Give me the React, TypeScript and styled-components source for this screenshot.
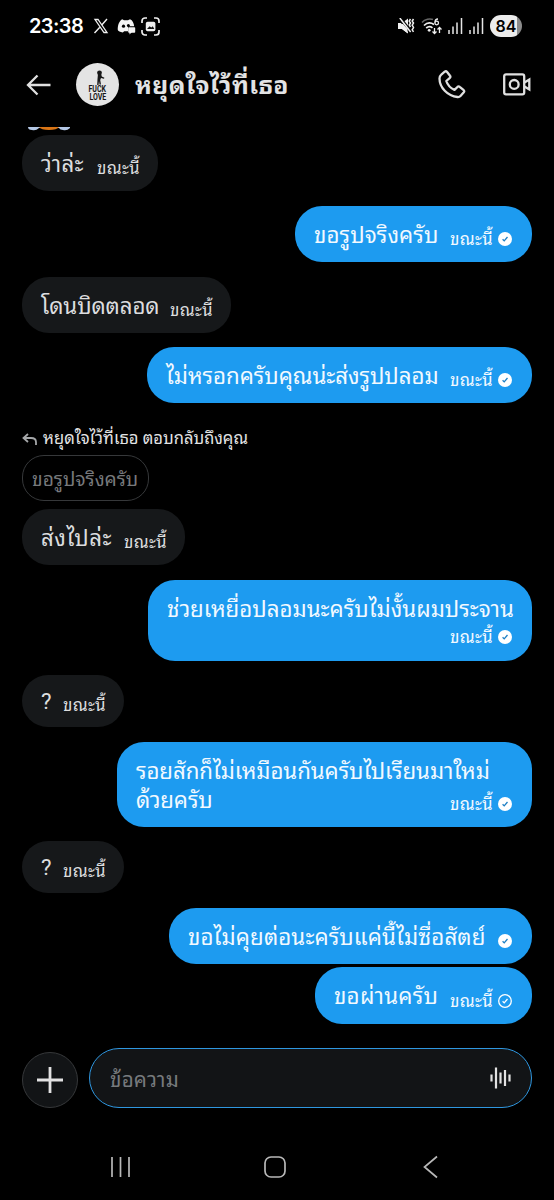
import React from "react";
import styled, { createGlobalStyle } from "styled-components";

const Global = createGlobalStyle`
  * { box-sizing: border-box; }
  body { margin: 0; background: #000; }
`;

const Screen = styled.div`
  width: 554px;
  height: 1200px;
  overflow: hidden;
  display: flex;
  flex-direction: column;
  background: #000;
  color: #e2e3e4;
  font-family: Roboto, "Noto Sans Thai Looped", "Noto Sans Thai", "Noto Sans", "Open Sans", sans-serif;
`;

const StatusBar = styled.header`
  height: 52px;
  flex: none;
  display: flex;
  align-items: center;
  justify-content: space-between;
  padding: 0 32px 0 29px;
  svg { display: block; flex: none; }
`;

const StatusGroup = styled.div<{ $gap: number }>`
  display: flex;
  align-items: center;
  gap: ${(p) => p.$gap}px;
`;

const Clock = styled.span`
  font: 600 20px/24px Inter, sans-serif;
  color: #fff;
  width: 56px;
  white-space: nowrap;
  letter-spacing: -0.6px;
`;

const DiscordIcon = styled.svg`
  margin-left: 0;
`;

const CaptureIcon = styled.svg`
  margin-left: -3px;
`;

const Battery = styled.span`
  width: 32px;
  height: 22px;
  border-radius: 11px;
  background: linear-gradient(90deg, #ececec 84%, #8b8b8b 84%);
  color: #000;
  font: 600 16px/22px Inter, sans-serif;
  text-align: center;
`;

const TopBar = styled.div`
  height: 75px;
  flex: none;
  display: flex;
  align-items: center;
  padding: 0 23px 10px 26px;
  svg { display: block; flex: none; }
`;

const Avatar = styled.div`
  width: 43px;
  height: 43px;
  margin-left: 25px;
  border-radius: 50%;
  background: #e4e4e4;
  color: #171717;
  display: flex;
  flex-direction: column;
  align-items: center;
  padding-top: 7px;
`;

const AvatarWord = styled.span`
  font: 700 9px/8px Roboto, sans-serif;
  transform: scaleX(0.78);
`;

const Title = styled.h1`
  margin: 0 auto 0 16px;
  padding-top: 2px;
  font-size: 24.6px;
  font-weight: 700;
  line-height: 32px;
  white-space: nowrap;
  letter-spacing: 0.45px;
`;

const Actions = styled.div`
  display: flex;
  align-items: center;
  gap: 37px;
`;

const Thread = styled.main`
  flex: none;
  height: 920px;
  padding: 0 22px;
  display: flex;
  flex-direction: column;
  align-items: flex-start;
`;

const Sticker = styled.svg`
  display: block;
  margin-left: 5px;
  flex: none;
`;

const Bubble = styled.div<{ $mine?: boolean; $w: number; $h: number; $gap: number }>`
  flex: none;
  align-self: ${(p) => (p.$mine ? "flex-end" : "flex-start")};
  width: ${(p) => p.$w}px;
  height: ${(p) => p.$h}px;
  margin-top: ${(p) => p.$gap}px;
  border-radius: 27px;
  background: ${(p) => (p.$mine ? "#1d9bf0" : "#16181a")};
  color: ${(p) => (p.$mine ? "#f2f9ff" : "#dcdddf")};
  padding: ${(p) => (p.$h < 56 ? 12 : 15)}px 18px ${(p) => (p.$h > 60 ? 13 : 12)}px 19px;
  display: flex;
  flex-direction: column;
`;

const LastRow = styled.div`
  flex: 1;
  display: flex;
  justify-content: space-between;
`;

const Words = styled.div<{ $track: number }>`
  flex: none;
  height: 29px;
  font-size: 22.3px;
  line-height: 29px;
  white-space: nowrap;
  letter-spacing: ${(p) => p.$track}px;
`;

const Meta = styled.div`
  display: flex;
  flex: none;
  align-items: center;
  align-self: flex-end;
  gap: 5px;
  height: 22px;
  margin-left: auto;
  font-size: 17px;
  line-height: 22px;
  letter-spacing: 0.3px;
  white-space: nowrap;
  svg { display: block; margin-right: 2px; }
`;

const ReplyLabel = styled.div`
  display: flex;
  align-items: center;
  gap: 6px;
  height: 24px;
  margin-top: 24px;
  font-size: 16.6px;
  line-height: 24px;
  white-space: nowrap;
`;

const Quote = styled.div`
  width: 127px;
  height: 46px;
  margin-top: 4px;
  border: 1px solid #36383a;
  border-radius: 22px;
  padding-left: 9px;
  color: #77797c;
  font-size: 19.2px;
  line-height: 47px;
  white-space: nowrap;
`;

const Composer = styled.div`
  flex: none;
  height: 61px;
  padding: 0 22px;
  display: flex;
  align-items: flex-end;
  gap: 11px;
`;

const AddButton = styled.button`
  width: 56px;
  height: 56px;
  padding: 0;
  border-radius: 50%;
  border: 1px solid #36383a;
  background: #121416;
  display: flex;
  align-items: center;
  justify-content: center;
`;

const Field = styled.div`
  flex: 1;
  height: 60px;
  border: 1.5px solid #2f97e0;
  border-radius: 31px;
  background: #121416;
  display: flex;
  align-items: center;
  justify-content: space-between;
  padding: 0 19px 0 20px;
  color: #777a7d;
  font-size: 20.6px;
  letter-spacing: 0.2px;
  span { padding-bottom: 1px; }
`;

const NavBar = styled.nav`
  flex: 1;
  display: flex;
  align-items: flex-start;
  padding: 47px 0 0 109px;
  svg { display: block; }
`;

const Tick = ({ outline }: { outline?: boolean }) => (
  <svg width="14" height="14" viewBox="0 0 14 14" fill="none">
    <circle cx="7" cy="7" r={outline ? 6.3 : 7} fill={outline ? "none" : "#fff"} stroke={outline ? "#fff" : "none"} strokeWidth="1.3" />
    <path d="M4.6 7.3l1.6 1.6 3.3-3.9" stroke={outline ? "#fff" : "#1d7fc4"} strokeWidth="1.3" />
  </svg>
);

type Msg = { lines: string[]; w: number; h: number; gap: number; mine?: boolean; stack?: boolean; track?: number; time?: string; sent?: boolean };

const Message = ({ lines, w, h, gap, mine, stack, track = 0, time = "ขณะนี้", sent }: Msg) => {
  const full = stack ? lines : lines.slice(0, -1);
  const last = stack ? null : lines[lines.length - 1];
  return (
    <Bubble $mine={mine} $w={w} $h={h} $gap={gap}>
      {full.map((line) => <Words key={line} $track={track}>{line}</Words>)}
      <LastRow>
        {last && <Words $track={track}>{last}</Words>}
        <Meta>
          {time && <span>{time}</span>}
          {mine && <Tick outline={sent} />}
        </Meta>
      </LastRow>
    </Bubble>
  );
};

const before: Msg[] = [
  { lines: ["ว่าล่ะ"], w: 136, h: 56, gap: 4, track: 0.3 },
  { lines: ["ขอรูปจริงครับ"], w: 237, h: 56, gap: 15, mine: true, track: 0.1 },
  { lines: ["โดนบิดตลอด"], w: 209, h: 56, gap: 15, track: -0.1 },
  { lines: ["ไม่หรอกครับคุณน่ะส่งรูปปลอม"], w: 385, h: 56, gap: 14, mine: true, track: -0.05 },
];

const after: Msg[] = [
  { lines: ["ส่งไปล่ะ"], w: 163, h: 56, gap: 8, track: 0.5 },
  { lines: ["ช่วยเหยื่อปลอมนะครับไม่งั้นผมประจาน"], w: 384, h: 81, gap: 15, mine: true, stack: true },
  { lines: ["?"], w: 102, h: 52, gap: 14 },
  { lines: ["รอยสักก็ไม่เหมือนกันครับไปเรียนมาใหม่", "ด้วยครับ"], w: 415, h: 85, gap: 15, mine: true, track: -0.1 },
  { lines: ["?"], w: 102, h: 52, gap: 14 },
  { lines: ["ขอไม่คุยต่อนะครับแค่นี้ไม่ซื่อสัตย์"], w: 363, h: 56, gap: 15, mine: true, time: "", track: 0.1 },
  { lines: ["ขอผ่านครับ"], w: 217, h: 57, gap: 3, mine: true, sent: true, track: 0.25 },
];

const Signal = () => (
  <svg width="15" height="16" viewBox="0 0 15 16" stroke="#e6e6e6" strokeWidth="1.5">
    <path d="M1 12v4M5 8.5V16M9 4.5V16M13.5 0v16" />
  </svg>
);

export default function App() {
  return (
    <Screen>
      <Global />
      <StatusBar>
        <StatusGroup $gap={8}>
          <Clock>23:38</Clock>
          <svg width="16" height="16" viewBox="0 0 16 16" fill="none" stroke="#f0f0f0">
            <path d="M2 1.5h3l9 13h-3z" strokeWidth="1.3" />
            <path d="M14 1L9 6.7M6.8 9.2L1.5 15" strokeWidth="1.4" />
          </svg>
          <DiscordIcon width="19" height="17" viewBox="0 0 19 17">
            <path d="M5.2 1.200L7 2.200h4l2-1c2.600 1 3.800 3.800 4.200 7H11v5H7.200L5.800 14.500C3.200 14 1 13 .8 12 .6 8 1.800 3 5.200 1.200z" fill="#f4f4f4" />
            <circle cx="6.500" cy="8.200" r="1.600" /><circle cx="11.400" cy="7.600" r="1.500" />
            <rect x="11.200" y="9.300" width="7" height="5.400" rx=".8" fill="#f4f4f4" />
            <path d="M12.500 14v2.500l2.500-2.500" fill="#f4f4f4" />
          </DiscordIcon>
          <CaptureIcon width="19" height="19" viewBox="0 0 19 19" fill="none">
            <path d="M1 6V4a3 3 0 013-3h2M13 1h2a3 3 0 013 3v2M18 13v2a3 3 0 01-3 3h-2M6 18H4a3 3 0 01-3-3v-2" stroke="#eee" strokeWidth="1.7" />
            <rect x="4.8" y="4.8" width="9.6" height="9.4" rx="1.8" fill="#eee" />
            <path d="M6 12l2.6-2.8 1.7 1.2 1.5-1.2 1.5 2.8z" fill="#111" />
          </CaptureIcon>
        </StatusGroup>
        <StatusGroup $gap={6}>
          <svg width="17" height="16" viewBox="0 0 17 16">
            <path d="M0 5h4l6-4.5v15L4 11H0z" fill="#f0f0f0" />
            <path d="M1.500 0l11 14" stroke="#000" strokeWidth="4" />
            <path d="M1.8 0l10.8 14" stroke="#f0f0f0" strokeWidth="1.5" />
            <path d="M0 6h5l4.500 5v4.300L4 11H0z" fill="#f0f0f0" />
            <path d="M12.500 1l-1.300 2 1.3 2-1.3 2 1.3 2M15.500 1l-1.300 2 1.3 2-1.3 2.2 1.3 2.3-1.3 2.3 1.3 2" stroke="#f0f0f0" strokeWidth="1.5" fill="none" />
          </svg>
          <svg width="21" height="17" viewBox="0 0 21 17" fill="none">
            <path d="M1 4.5C4 1 9 .5 12 1.6" stroke="#666" strokeWidth="1.6" />
            <path d="M3 7.5c3-3 7-3 10-1M5.2 10c2-1.8 4.3-1.8 6.3-.2" stroke="#eee" strokeWidth="1.7" />
            <circle cx="8.2" cy="12.3" r="1.4" fill="#eee" />
            <path d="M17 1c-2 0-3 1.2-3 3.4" stroke="#eee" strokeWidth="1.3" />
            <circle cx="15.7" cy="5" r="1.8" stroke="#eee" strokeWidth="1.3" />
            <path d="M13.5 10v5.5M11.5 13.5l2 2 2-2M18.5 15V9.5M16.5 11.5l2-2 2 2" stroke="#eee" strokeWidth="1.3" />
          </svg>
          <Signal />
          <Signal />
          <Battery>84</Battery>
        </StatusGroup>
      </StatusBar>
      <TopBar>
        <svg width="25" height="22" viewBox="0 0 25 22" fill="none" stroke="#e0e0e0" strokeWidth="2.3">
          <path d="M24.5 11H2.5M11.5 1.5L2 11l9.500 9.500" />
        </svg>
        <Avatar>
          <svg width="14" height="15" viewBox="0 0 14 15" fill="#171717">
            <circle cx="8.500" cy="2.800" r="2.400" />
            <path d="M7 3.500h3l.8 3 2.600 1.300-.4 1-3-.8-.8 2 .8 4.500H8.500L8 11l-.5 4H6.200L6.500 9z" />
          </svg>
          <AvatarWord>FUCK</AvatarWord>
          <AvatarWord>LOVE</AvatarWord>
        </Avatar>
        <Title>หยุดใจไว้ที่เธอ</Title>
        <Actions>
          <svg width="28" height="30" viewBox="0 0 28 30" fill="none" stroke="#e0e0e0" strokeWidth="2.300" strokeLinejoin="round">
            <path d="M3 4.800L6.700 1.700Q8 .8 9.100 2L12 5.800q.8 1-.1 2L8.300 11c1.200 3.800 4 7 8.200 8.900l3.200-3.200q1-.8 2 .1l4 3.400q1 1 .1 2.100l-3.300 3.700q-1.100 1.200-3 1C9.500 26 1.500 17.500 1.500 8.500Q1.500 6 3 4.800z" />
          </svg>
          <svg width="28" height="23" viewBox="0 0 28 23" fill="none" stroke="#e0e0e0" strokeWidth="2.300">
            <rect x="1.200" y="1.400" width="20" height="20" rx="1.800" />
            <circle cx="11.200" cy="11.400" r="4.400" />
            <path d="M21.500 9.500l4.800-3v10l-4.800-3" />
          </svg>
        </Actions>
      </TopBar>
      <Thread>
        <Sticker width="44" height="4" viewBox="0 0 44 4">
          <path d="M1 0h42v1q-3 3-7 2-3 0-4-2H12Q9 4 5 3 1 3 1 0z" fill="#b5c8e6" />
          <path d="M12 0h20q-2 3-10 3T12 0z" fill="#d97516" />
        </Sticker>
        {before.map((m, i) => <Message key={i} {...m} />)}
        <ReplyLabel>
          <svg width="15" height="13" viewBox="0 0 15 13" fill="none" stroke="#a5a7a9" strokeWidth="1.800">
            <path d="M6 1L1.500 5 6 9M2 5h7q5 0 5 4v3" />
          </svg>
          <span>หยุดใจไว้ที่เธอ ตอบกลับถึงคุณ</span>
        </ReplyLabel>
        <Quote>ขอรูปจริงครับ</Quote>
        {after.map((m, i) => <Message key={i} {...m} />)}
      </Thread>
      <Composer>
        <AddButton aria-label="+">
          <svg width="26" height="26" viewBox="0 0 26 26" stroke="#e2e2e2" strokeWidth="2.800">
            <path d="M13 0v26M0 13h26" />
          </svg>
        </AddButton>
        <Field>
          <span>ข้อความ</span>
          <svg width="23" height="22" viewBox="0 0 23 22" stroke="#e2e2e2" strokeWidth="2.200">
            <path d="M2.500 7.500v7M7 .5v21M11.500 5.500v11M16 3v16M20.500 7.500v7" />
          </svg>
        </Field>
      </Composer>
      <NavBar>
        <svg width="350" height="24" viewBox="0 0 350 24" fill="none" stroke="#b8b8b8" strokeWidth="1.700">
          <path d="M3 2v20M11.500 2v20M20 2v20" />
          <rect x="156" y="2" width="20" height="20" rx="6" />
          <path d="M328 1.500L315.500 12 328 22.500" />
        </svg>
      </NavBar>
    </Screen>
  );
}
